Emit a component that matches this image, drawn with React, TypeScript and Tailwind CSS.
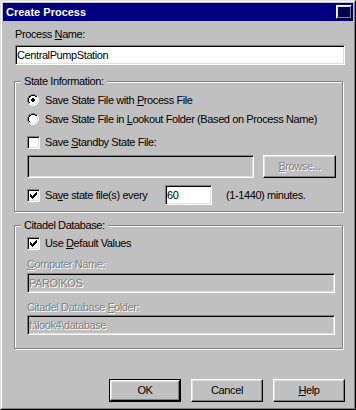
import React from "react";

// classic win95 bevels
const raised =
  "border border-t-white border-l-white border-r-black border-b-black shadow-[inset_-1px_-1px_0_#808080,inset_1px_1px_0_#dfdfdf]";
const sunken =
  "border border-t-[#808080] border-l-[#808080] border-r-white border-b-white shadow-[inset_1px_1px_0_#000,inset_-1px_-1px_0_#dfdfdf]";
const grayed = "text-[#808080] [text-shadow:1px_1px_0_#fff]";

const Pixels = ({ rows, colors }: { rows: string[]; colors: Record<string, string> }) => (
  <svg width={rows[0].length} height={rows.length} shapeRendering="crispEdges" className="block">
    {rows.flatMap((r, y) =>
      r.split("").map((c, x) =>
        colors[c] ? <rect key={`${x}-${y}`} x={x} y={y} width={1} height={1} fill={colors[c]} /> : null
      )
    )}
  </svg>
);

const CHECK = [
  "......X",
  ".....XX",
  "X...XXX",
  "XX.XXX.",
  "XXXXX..",
  ".XXX...",
  "..X....",
];

const RADIO = [
  "....GGGG....",
  "..GGKKKKGG..",
  ".GKKwwwwKKW.",
  ".GKwwwwwwLW.",
  "GKwwwwwwwwLW",
  "GKwwwwwwwwLW",
  "GKwwwwwwwwLW",
  "GKwwwwwwwwLW",
  ".GKwwwwwwLW.",
  ".GLLwwwwLLW.",
  "..WWLLLLWW..",
  "....WWWW....",
];

const DOT = ["....", ".XX.", "XXXX", "XXXX", ".XX."];

const CLOSE = [
  "XX....XX",
  ".XX..XX.",
  "..XXXX..",
  "...XX...",
  "..XXXX..",
  ".XX..XX.",
  "XX....XX",
];

const radioColors = { G: "#808080", K: "#000000", w: "#ffffff", L: "#dfdfdf", W: "#ffffff" };

const Radio = ({ checked }: { checked?: boolean }) => {
  const rows = checked
    ? RADIO.map((r, y) =>
        y >= 4 && y <= 7
          ? r
              .split("")
              .map((c, x) => (x >= 4 && x <= 7 && DOT[y - 3][x - 4] === "X" ? "X" : c))
              .join("")
          : r
      )
    : RADIO;
  return <Pixels rows={rows} colors={{ ...radioColors, X: "#000000" }} />;
};

const Check = ({ checked }: { checked?: boolean }) => (
  <span className={`${sunken} bg-white w-[13px] h-[13px] flex items-center justify-center`}>
    {checked && <Pixels rows={CHECK} colors={{ X: "#000000" }} />}
  </span>
);

const Field = ({
  text,
  disabled,
  className,
}: {
  text?: string;
  disabled?: boolean;
  className: string;
}) => (
  <div
    className={`${sunken} ${disabled ? "bg-[#c0c0c0]" : "bg-white"} flex items-center pl-[1px] ${className}`}
  >
    {text && <span className={disabled ? grayed : "text-black"}>{text}</span>}
  </div>
);

const Group = ({ title, children, className }: { title: string; children: React.ReactNode; className: string }) => (
  <fieldset
    className={`ml-[11px] w-[329px] border border-[#808080] shadow-[1px_1px_0_#fff,inset_1px_1px_0_#fff] ${className}`}
  >
    <legend className="ml-[6px] px-[3px] bg-[#c0c0c0] leading-[13px]">{title}</legend>
    <div className="pl-[12px] flex flex-col">{children}</div>
  </fieldset>
);

const Button = ({ children, def }: { children: React.ReactNode; def?: boolean }) =>
  def ? (
    <div className="w-[72px] h-[23px] border border-black flex">
      <div className={`${raised} flex-1 flex items-center justify-center`}>{children}</div>
    </div>
  ) : (
    <div className={`${raised} w-[72px] h-[23px] flex items-center justify-center`}>{children}</div>
  );

export default function App() {
  return (
    <div className="w-[356px] h-[410px] bg-[#c0c0c0] border border-t-[#dfdfdf] border-l-[#dfdfdf] border-r-black border-b-black font-['Liberation_Sans',Arial,sans-serif] text-[11px] leading-[13px] tracking-[-0.4px] text-black select-none">
      <div className="h-full border border-t-white border-l-white border-r-[#808080] border-b-[#808080] p-px flex flex-col">
        {/* title bar */}
        <div className="h-[18px] bg-[#000080] flex items-center justify-between pl-[3px] pr-px">
          <span className="text-white font-bold tracking-normal">Create Process</span>
          <div className={`${raised} w-[16px] h-[14px] flex items-center justify-center pr-px pb-px`}>
            <Pixels rows={CLOSE} colors={{ X: "#000000" }} />
          </div>
        </div>

        <div className="flex flex-col">
          <div className="pl-[12px] mt-[7px]">
            Process <u>N</u>ame:
          </div>
          <Field text="CentralPumpStation" className="ml-[12px] mt-[4px] w-[330px] h-[20px]" />

          <Group title="State Information:" className="mt-[10px] pb-[6px]">
            <div className="mt-[4px] h-[16px] flex items-center">
              <span className="w-[18px]">
                <Radio checked />
              </span>
              <span>
                Save State File with <u>P</u>rocess File
              </span>
            </div>
            <div className="mt-[3px] h-[16px] flex items-center">
              <span className="w-[18px]">
                <Radio />
              </span>
              <span>
                Save State File in <u>L</u>ookout Folder (Based on Process Name)
              </span>
            </div>
            <div className="mt-[7px] h-[16px] flex items-center">
              <span className="w-[18px]">
                <Check />
              </span>
              <span>
                Save <u>S</u>tandby State File:
              </span>
            </div>
            <div className="mt-[5px] flex items-center gap-[9px]">
              <Field disabled className="w-[227px] h-[23px]" />
              <div className={`${raised} w-[73px] h-[23px] flex items-center justify-center`}>
                <span className={grayed}>
                  <u>B</u>rowse...
                </span>
              </div>
            </div>
            <div className="mt-[7px] h-[20px] flex items-center">
              <span className="w-[18px]">
                <Check checked />
              </span>
              <span className="w-[120px]">
                Sa<u>v</u>e state file(s) every
              </span>
              <Field text="60" className="w-[47px] h-[20px]" />
              <span className="ml-[14px]">(1-1440) minutes.</span>
            </div>
          </Group>

          <Group title="Citadel Database:" className="mt-[7px] pb-[13px]">
            <div className="mt-[3px] h-[16px] flex items-center">
              <span className="w-[18px]">
                <Check checked />
              </span>
              <span>
                Use <u>D</u>efault Values
              </span>
            </div>
            <div className={`mt-[7px] ${grayed}`}>
              <u>C</u>omputer Name:
            </div>
            <Field disabled text="PAROIKOS" className="mt-[2px] w-[308px] h-[20px]" />
            <div className={`mt-[8px] ${grayed}`}>
              Citadel Database <u>F</u>older:
            </div>
            <Field disabled text="f:\look4\database" className="mt-[1px] w-[308px] h-[20px]" />
          </Group>

          <div className="mt-[30px] flex justify-end gap-[10px] pr-[8px]">
            <Button def>OK</Button>
            <Button>Cancel</Button>
            <Button>
              <u>H</u>elp
            </Button>
          </div>
        </div>
      </div>
    </div>
  );
}
